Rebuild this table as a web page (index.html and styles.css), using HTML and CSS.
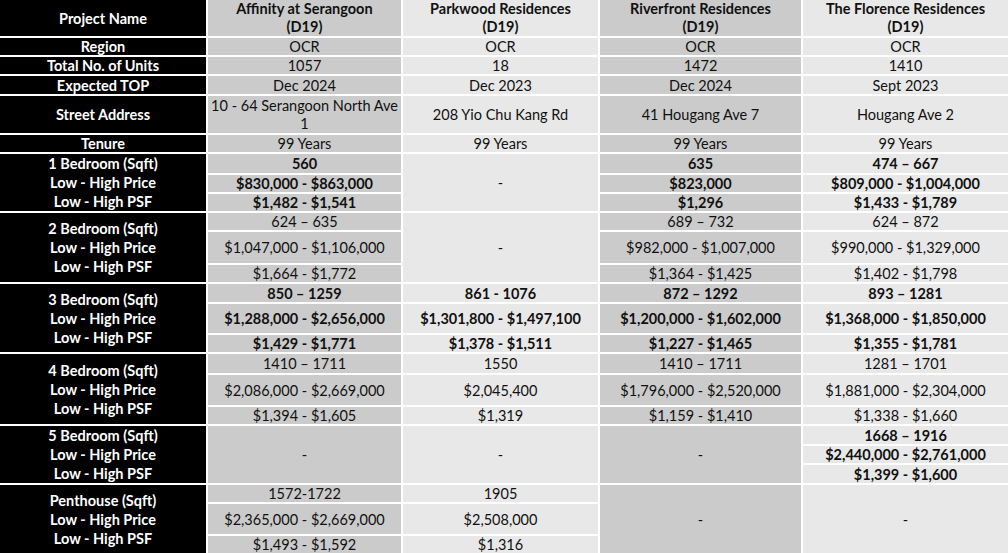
FILE: index.html
```html
<!DOCTYPE html>
<html>
<head>
<meta charset="utf-8">
<title>Condo Comparison</title>
<link rel="stylesheet" href="styles.css">
</head>
<body>
<table class="cmp">
  <colgroup>
    <col class="c0"><col class="c1"><col class="c2"><col class="c3"><col class="c4">
  </colgroup>
  <tr class="h-head">
    <th class="lab">Project Name</th>
    <th class="a two">Affinity at Serangoon<br>(D19)</th>
    <th class="b two">Parkwood Residences<br>(D19)</th>
    <th class="a two">Riverfront Residences<br>(D19)</th>
    <th class="b two">The Florence Residences<br>(D19)</th>
  </tr>
  <tr class="h17">
    <th class="lab sep">Region</th>
    <td class="a">OCR</td><td class="b">OCR</td><td class="a">OCR</td><td class="b">OCR</td>
  </tr>
  <tr class="h17">
    <th class="lab">Total No. of Units</th>
    <td class="a">1057</td><td class="b">18</td><td class="a">1472</td><td class="b">1410</td>
  </tr>
  <tr class="h18">
    <th class="lab">Expected TOP</th>
    <td class="a">Dec 2024</td><td class="b">Dec 2023</td><td class="a">Dec 2024</td><td class="b">Sept 2023</td>
  </tr>
  <tr class="h37">
    <th class="lab">Street Address</th>
    <td class="a two">10 - 64 Serangoon North Ave<br>1</td>
    <td class="b">208 Yio Chu Kang Rd</td>
    <td class="a">41 Hougang Ave 7</td>
    <td class="b">Hougang Ave 2</td>
  </tr>
  <tr class="h17">
    <th class="lab">Tenure</th>
    <td class="a">99 Years</td><td class="b">99 Years</td><td class="a">99 Years</td><td class="b">99 Years</td>
  </tr>

  <!-- 1 Bedroom -->
  <tr class="h19">
    <th class="lab grp" rowspan="3">1 Bedroom (Sqft)<br>Low - High Price<br>Low - High PSF</th>
    <td class="a bold">560</td>
    <td class="b" rowspan="3">-</td>
    <td class="a bold">635</td>
    <td class="b bold">474 – 667</td>
  </tr>
  <tr class="h17">
    <td class="a bold">$830,000 - $863,000</td>
    <td class="a bold">$823,000</td>
    <td class="b bold">$809,000 - $1,004,000</td>
  </tr>
  <tr class="h17">
    <td class="a bold">$1,482 - $1,541</td>
    <td class="a bold">$1,296</td>
    <td class="b bold">$1,433 - $1,789</td>
  </tr>

  <!-- 2 Bedroom -->
  <tr class="h17">
    <th class="lab grp" rowspan="3">2 Bedroom (Sqft)<br>Low - High Price<br>Low - High PSF</th>
    <td class="a">624 – 635</td>
    <td class="b" rowspan="3">-</td>
    <td class="a">689 – 732</td>
    <td class="b">624 – 872</td>
  </tr>
  <tr class="h31">
    <td class="a">$1,047,000 - $1,106,000</td>
    <td class="a">$982,000 - $1,007,000</td>
    <td class="b">$990,000 - $1,329,000</td>
  </tr>
  <tr class="h17">
    <td class="a">$1,664 - $1,772</td>
    <td class="a">$1,364 - $1,425</td>
    <td class="b">$1,402 - $1,798</td>
  </tr>

  <!-- 3 Bedroom -->
  <tr class="h18">
    <th class="lab grp" rowspan="3">3 Bedroom (Sqft)<br>Low - High Price<br>Low - High PSF</th>
    <td class="a bold">850 – 1259</td>
    <td class="b bold">861 - 1076</td>
    <td class="a bold">872 – 1292</td>
    <td class="b bold">893 – 1281</td>
  </tr>
  <tr class="h29">
    <td class="a bold">$1,288,000 - $2,656,000</td>
    <td class="b bold">$1,301,800 - $1,497,100</td>
    <td class="a bold">$1,200,000 - $1,602,000</td>
    <td class="b bold">$1,368,000 - $1,850,000</td>
  </tr>
  <tr class="h17">
    <td class="a bold">$1,429 - $1,771</td>
    <td class="b bold">$1,378 - $1,511</td>
    <td class="a bold">$1,227 - $1,465</td>
    <td class="b bold">$1,355 - $1,781</td>
  </tr>

  <!-- 4 Bedroom -->
  <tr class="h19">
    <th class="lab grp" rowspan="3">4 Bedroom (Sqft)<br>Low - High Price<br>Low - High PSF</th>
    <td class="a">1410 – 1711</td>
    <td class="b">1550</td>
    <td class="a">1410 – 1711</td>
    <td class="b">1281 – 1701</td>
  </tr>
  <tr class="h30">
    <td class="a">$2,086,000 - $2,669,000</td>
    <td class="b">$2,045,400</td>
    <td class="a">$1,796,000 - $2,520,000</td>
    <td class="b">$1,881,000 - $2,304,000</td>
  </tr>
  <tr class="h16">
    <td class="a">$1,394 - $1,605</td>
    <td class="b">$1,319</td>
    <td class="a">$1,159 - $1,410</td>
    <td class="b">$1,338 - $1,660</td>
  </tr>

  <!-- 5 Bedroom -->
  <tr class="h18">
    <th class="lab grp" rowspan="3">5 Bedroom (Sqft)<br>Low - High Price<br>Low - High PSF</th>
    <td class="a" rowspan="3">-</td>
    <td class="b" rowspan="3">-</td>
    <td class="a" rowspan="3">-</td>
    <td class="b bold">1668 – 1916</td>
  </tr>
  <tr class="h17">
    <td class="b bold">$2,440,000 - $2,761,000</td>
  </tr>
  <tr class="h18">
    <td class="b bold">$1,399 - $1,600</td>
  </tr>

  <!-- Penthouse -->
  <tr class="h17">
    <th class="lab grp" rowspan="3">Penthouse (Sqft)<br>Low - High Price<br>Low - High PSF</th>
    <td class="a">1572-1722</td>
    <td class="b">1905</td>
    <td class="a" rowspan="3">-</td>
    <td class="b" rowspan="3">-</td>
  </tr>
  <tr class="h30">
    <td class="a">$2,365,000 - $2,669,000</td>
    <td class="b">$2,508,000</td>
  </tr>
  <tr class="h17">
    <td class="a">$1,493 - $1,592</td>
    <td class="b">$1,316</td>
  </tr>
</table>
</body>
</html>
```
FILE: styles.css
```css
html, body {
  margin: 0;
  padding: 0;
  background: #ffffff;
  overflow: hidden;
}

.cmp {
  margin: -2px 0 0 -2px;
  border-collapse: separate;
  border-spacing: 2px;
  table-layout: fixed;
  width: 1012px;
  font-family: Lato, "Liberation Sans", sans-serif;
  font-size: 14.5px;
  color: #111;
}

.c0 { width: 206px; }
.c1 { width: 193px; }
.c2 { width: 195px; }
.c3 { width: 201px; }
.c4 { width: 205px; }

.cmp th,
.cmp td {
  padding: 0 2px;
  text-align: center;
  vertical-align: middle;
  line-height: 17px;
  white-space: nowrap;
  overflow: hidden;
}

.cmp th { font-weight: 700; }

.lab {
  background: #000;
  color: #fff;
  font-weight: 700;
}

.grp { line-height: 19px !important; }

.a { background: #cbcbcb; }
.b { background: #e8e8e8; }

.bold { font-weight: 700; }

.two { line-height: 18px !important; }

.h-head { height: 35px; }
.h16 { height: 16px; }
.h17 { height: 17px; }
.h18 { height: 18px; }
.h19 { height: 19px; }
.h29 { height: 29px; }
.h30 { height: 30px; }
.h31 { height: 31px; }
.h37 { height: 37px; }
```
